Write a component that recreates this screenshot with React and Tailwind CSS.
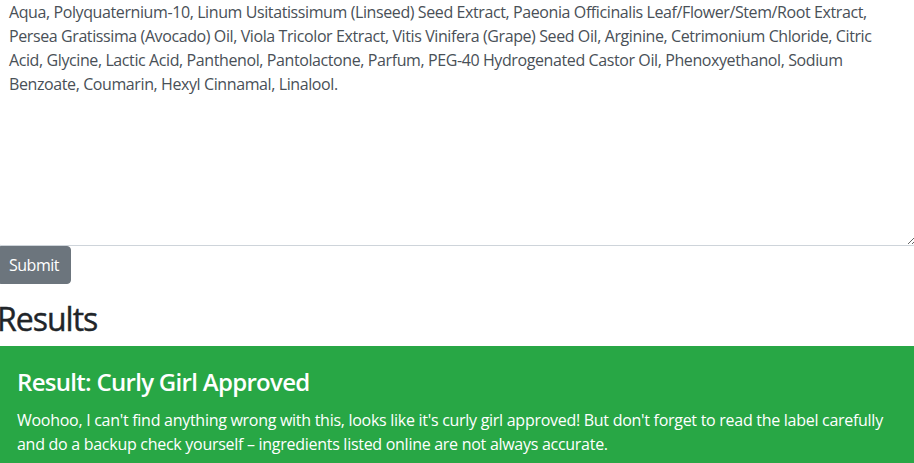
import React from "react";

const ingredients =
  "Aqua, Polyquaternium-10, Linum Usitatissimum (Linseed) Seed Extract, Paeonia Officinalis Leaf/Flower/Stem/Root Extract, Persea Gratissima (Avocado) Oil, Viola Tricolor Extract, Vitis Vinifera (Grape) Seed Oil, Arginine, Cetrimonium Chloride, Citric Acid, Glycine, Lactic Acid, Panthenol, Pantolactone, Parfum, PEG-40 Hydrogenated Castor Oil, Phenoxyethanol, Sodium Benzoate, Coumarin, Hexyl Cinnamal, Linalool.";

export default function App() {
  return (
    <div className="h-[463px] w-[914px] overflow-hidden bg-white font-['Open_Sans',sans-serif] text-[16px] leading-[24px] tracking-[-0.4px] text-[#212529]">
      <div className="-ml-[3px] -mt-[7px] w-[920px]">
        <textarea
          readOnly
          defaultValue={ingredients}
          className="block h-[253px] w-[920px] resize-y rounded-[4px] border border-[#ced4da] bg-white pl-[11px] pr-[12px] py-[6px] font-['Open_Sans',sans-serif] text-[16px] leading-[24px] tracking-[-0.4px] text-[#495057] outline-none"
        />
        <button className="block h-[38px] rounded-[4px] border border-[#6c757d] bg-[#6c757d] px-[11px] text-[16px] leading-[24px] tracking-[-0.5px] text-white">
          Submit
        </button>
        <h2 className="mt-[16px] mb-[8px] text-[32px] font-medium leading-[38.4px] tracking-[-1px] text-[#212529] [-webkit-text-stroke:0.4px_#212529]">
          Results
        </h2>
        <div className="rounded-[4px] bg-[#28a745] px-[20px] pt-[12px] pb-[12px] text-white">
          <h4 className="mb-[11px] mt-[10px] text-[24px] font-semibold leading-[28.8px] tracking-[-0.7px]">
            Result: Curly Girl Approved
          </h4>
          <p className="tracking-[-0.28px]">
            Woohoo, I can't find anything wrong with this, looks like it's curly girl approved! But don't forget to read the label carefully and do a backup check yourself – ingredients listed online are not always accurate.
          </p>
        </div>
      </div>
    </div>
  );
}
